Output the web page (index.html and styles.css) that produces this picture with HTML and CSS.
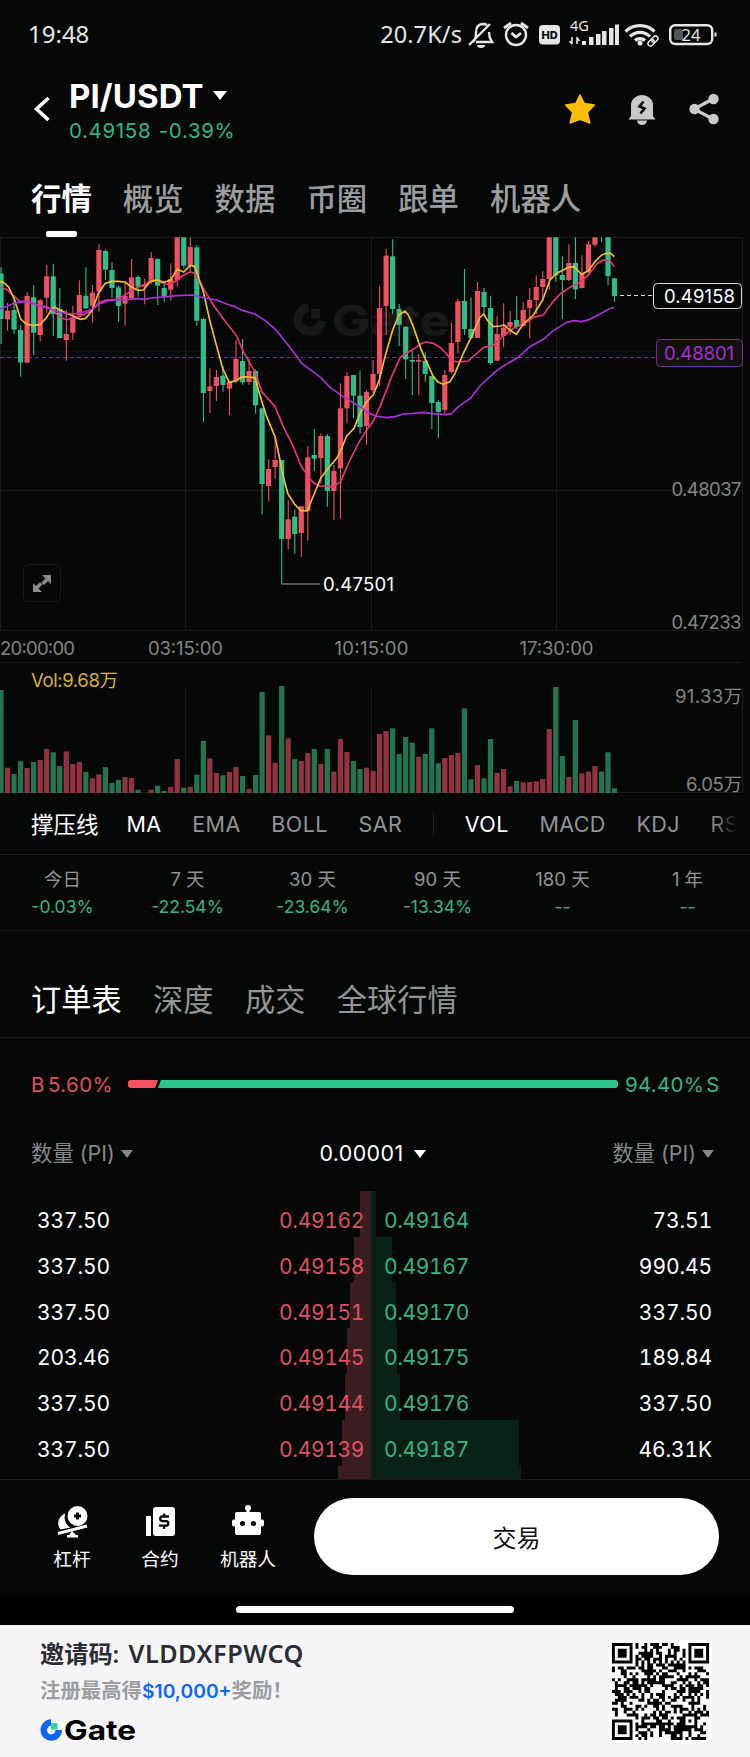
FILE: index.html
```html
<!DOCTYPE html>
<html lang="zh-CN">
<head>
    <meta charset="UTF-8">
    <meta name="viewport" content="width=device-width, initial-scale=1.0">
    <title>PI/USDT</title>
    <link rel="stylesheet" href="styles.css">
</head>
<body>

<div class="status-bar">
    <span class="clock">19:48</span>
    <div class="status-right">
        <span class="net-speed">20.7K/s</span>
        <svg class="status-icons" width="252" height="34" viewBox="465 16 252 34" fill="none" stroke="#e6e6e6" stroke-width="2.4">
            <!-- muted bell -->
            <path d="M473 41c2-2 3-5 3-9 0-5 2-9 7-9 1.500 0 3 .4 4 1M489 31c0 5 1 7 3 10H476M469 44L490 23"/>
            <path d="M477 44h8a4 3 0 0 1-8 0z" fill="#e6e6e6" stroke="none"/>
            <!-- alarm -->
            <circle cx="516" cy="34" r="10"/>
            <path d="M511.500 32l4.500 4 5-4M504 27l7-5M528 27l-7-5" stroke-width="2.800"/>
            <!-- hd -->
            <rect x="539" y="24" width="21" height="19.500" rx="4" fill="#e6e6e6" stroke="none"/>
            <text x="549.500" y="38" font-size="11" class="hd-text" text-anchor="middle">HD</text>
            <!-- signal -->
            <text x="570" y="30" font-size="14.500">4G</text>
            <path d="M572 36v7M569.500 40l2.500 3M577 43v-7M579.500 40l-2.500-3" stroke-width="1.600"/>
            <g fill="#e6e6e6" stroke="none">
                <rect x="582" y="40" width="4" height="4"/>
                <rect x="589" y="36" width="4.500" height="8"/>
                <rect x="596" y="33" width="4.500" height="11"/>
                <rect x="602" y="30" width="4.500" height="14"/>
                <rect x="609" y="27" width="4.500" height="17"/>
                <rect x="615" y="23.500" width="4" height="20.500"/>
            </g>
            <!-- wifi -->
            <path d="M625.500 30.500a21 21 0 0 1 29 0M630 35.500a14 14 0 0 1 20 0M635 39.500a7.500 7.500 0 0 1 10 0" stroke-width="3.200"/>
            <circle cx="640" cy="42" r="2.500" fill="#e6e6e6" stroke="none"/>
            <g stroke-width="1.500" transform="rotate(-45 653 40)">
                <rect x="647" y="37.500" width="7" height="5" rx="2.500"/>
                <rect x="652" y="37.500" width="7" height="5" rx="2.500"/>
            </g>
            <!-- battery -->
            <rect x="670.200" y="24.200" width="42" height="18.800" rx="5"/>
            <rect x="674" y="28" width="9" height="11" rx="2" fill="#555" stroke="none"/>
            <path d="M714.500 31.500h2v4h-2z" fill="#e6e6e6" stroke="none"/>
            <text x="691" y="39.500" font-size="16.500" text-anchor="middle">24</text>
        </svg>
    </div>
</div>

<header class="pair-header">
    <svg class="back" width="20" height="28" viewBox="0 0 20 28"><path d="M16.500 3L4.500 14l12 11" fill="none" stroke="#fff" stroke-width="3.600"/></svg>
    <div class="pair">
        <div class="pair-name">PI/USDT<i class="caret caret-big"></i></div>
        <div class="pair-price">0.49158 <span>-0.39%</span></div>
    </div>
    <div class="header-icons">
        <svg width="34" height="34" viewBox="0 0 34 34"><path d="M17 3l4.300 8.600 10 1.400-7 7.400 2.500 10.600L17 27.200 7.200 31l2.500-10.600-7-7.400 10-1.400z" fill="#ffbd0a" stroke="#ffbd0a" stroke-width="1.500" stroke-linejoin="round"/></svg>
        <svg width="34" height="34" viewBox="0 0 34 34">
            <path d="M6 24V13a11 10 0 0 1 22 0v11l2.500 3.500h-27zM12 28.500h10a5 4.500 0 0 1-10 0z" fill="#c8cacc"/>
            <path d="M18.500 9.500L14.500 14.500 19.500 16.500 15.500 21.500" fill="none" stroke="#060808" stroke-width="2.600"/>
        </svg>
        <svg width="34" height="34" viewBox="0 0 34 34" fill="#c8cacc">
            <path d="M26 7L7 17l19 10" fill="none" stroke="#c8cacc" stroke-width="3.200"/>
            <circle cx="26.500" cy="7" r="5.200"/><circle cx="7.500" cy="17" r="5.200"/><circle cx="26.500" cy="27" r="5.200"/>
        </svg>
    </div>
</header>

<nav class="main-tabs">
    <a class="active">行情</a><a>概览</a><a>数据</a><a>币圈</a><a>跟单</a><a>机器人</a>
</nav>

<svg class="chart" id="chart" width="750" height="557" viewBox="0 237 750 557">
    <g class="grid">
        <path d="M0 351.500H742" class="faint"/>
        <path d="M0 237.500H742M0 490.500H742M0 630.500H742M0 662.500H742M0 792.500H742"/>
        <path d="M.5 237V630M185.500 237V630M371.500 237V630M556.500 237V630M742.500 237V630M185.500 687V793M371.500 687V793M556.500 687V793M742.500 687V793"/>
    </g>
    <g class="watermark">
        <path d="M308.500 307.500a12 12 0 1 0 13.500 13.500" fill="none" stroke="#171818" stroke-width="9"/>
        <rect x="311" y="309" width="9" height="9"/>
        <text x="332" y="336" font-size="43" textLength="118" lengthAdjust="spacingAndGlyphs">Gate</text>
    </g>
    <path d="M0 357.500H656" class="level-line"/>
    <g id="candles"></g>
    <g id="lines"></g>
    <g id="volume"></g>
    <path d="M281.500 584H320" stroke="#9a9a9a" fill="none"/>
    <text x="323" y="591" class="label white" textLength="71">0.47501</text>
    <path d="M620 295.500H653" stroke="#ddd" stroke-dasharray="4 3" fill="none"/>
    <rect x="653.500" y="283.500" width="88" height="25" rx="4" class="price-box"/>
    <text x="664" y="303" class="label white" textLength="71">0.49158</text>
    <rect x="656.500" y="339.500" width="86" height="27" rx="4" class="level-box"/>
    <text x="664" y="360" class="label purple" textLength="70">0.48801</text>
    <text x="671.500" y="496" class="label" textLength="70">0.48037</text>
    <text x="671.500" y="629" class="label" textLength="70">0.47233</text>
    <text x="0" y="654.500" class="label" textLength="75">20:00:00</text>
    <text x="148" y="654.500" class="label" textLength="75">03:15:00</text>
    <text x="334.500" y="654.500" class="label" textLength="74">10:15:00</text>
    <text x="519.500" y="654.500" class="label" textLength="74">17:30:00</text>
    <text x="31" y="686.500" class="label yellow" textLength="87">Vol:9.68万</text>
    <text x="675" y="702.500" class="label" textLength="67">91.33万</text>
    <text x="686" y="791" class="label" textLength="56">6.05万</text>
    <rect x="23.500" y="564.500" width="37" height="37" rx="5" class="expand-box"/>
    <path d="M42 575h9v9l-3-3-4 4-2.500-2.500 4-4zM42 592h-9v-9l3 3 4-4 2.500 2.500-4 4z" fill="#8b8b8b"/>
</svg>

<div class="indicators">
    <span class="on cn">撑压线</span><span class="on">MA</span><span>EMA</span><span>BOLL</span><span>SAR</span>
    <i class="sep"></i>
    <span class="on">VOL</span><span>MACD</span><span>KDJ</span><span class="fade">RS</span>
</div>

<div class="performance">
    <div><p>今日</p><b>-0.03%</b></div>
    <div><p>7 天</p><b>-22.54%</b></div>
    <div><p>30 天</p><b>-23.64%</b></div>
    <div><p>90 天</p><b>-13.34%</b></div>
    <div><p>180 天</p><b>--</b></div>
    <div><p>1 年</p><b>--</b></div>
</div>

<nav class="book-tabs">
    <a class="active">订单表</a><a>深度</a><a>成交</a><a>全球行情</a>
</nav>

<div class="ratio">
    <span class="red">B 5.60%</span>
    <div class="ratio-bar"><i class="buy"></i><i class="sell"></i></div>
    <span class="green">94.40% S</span>
</div>

<div class="book-head">
    <span>数量 (PI)<i class="caret"></i></span>
    <span class="step">0.00001<i class="caret"></i></span>
    <span class="right">数量 (PI)<i class="caret"></i></span>
</div>

<div class="book" id="book"></div>

<div class="bottom-bar">
    <div class="tool">
        <svg width="34" height="34" viewBox="0 0 34 34" fill="#fff">
            <path d="M10.500 9.500a11 11 0 0 0 5 14L5.500 25.500A10 10 0 0 1 10.500 9.500z"/>
            <circle cx="22.500" cy="12" r="10"/>
            <path d="M22.500 8.500v7M19 12h7" stroke="#060808" stroke-width="3"/>
            <path d="M3 29.500L32 22" stroke="#fff" stroke-width="3"/>
            <path d="M17 27l4 4h2v2.500H12V31h2z"/>
        </svg>
        <span>杠杆</span>
    </div>
    <div class="tool">
        <svg width="34" height="34" viewBox="0 0 34 34" fill="#fff">
            <rect x="3" y="12" width="5" height="20"/>
            <rect x="10" y="3" width="22" height="29" rx="3"/>
            <path d="M26 12.500h-6.500a2.300 2.300 0 0 0 0 4.600h3.500a2.300 2.300 0 0 1 0 4.600H16M21.200 9.500V12M21.200 22v3" fill="none" stroke="#060808" stroke-width="2.300"/>
        </svg>
        <span>合约</span>
    </div>
    <div class="tool">
        <svg width="34" height="34" viewBox="0 0 34 34" fill="#fff">
            <circle cx="17" cy="4" r="3"/><rect x="15.500" y="4" width="3" height="5"/>
            <rect x="4" y="8" width="26" height="23" rx="2"/>
            <rect x="1" y="15.500" width="32" height="7" rx="2"/>
            <circle cx="11.500" cy="19.500" r="2.600" fill="#060808"/><circle cx="22.500" cy="19.500" r="2.600" fill="#060808"/>
        </svg>
        <span>机器人</span>
    </div>
    <button class="trade">交易</button>
</div>
<div class="home-area"><i></i></div>

<footer class="invite">
    <div class="invite-text">
        <h2>邀请码: <span>VLDDXFPWCQ</span></h2>
        <p>注册最高得<em>$10,000+</em>奖励！</p>
        <svg width="110" height="36" viewBox="0 0 110 36">
            <path d="M11 6.600A7.500 7.500 0 1 0 18.700 14" fill="none" stroke="#0b67fb" stroke-width="6.500"/>
            <rect x="11" y="7" width="6.500" height="6.500" fill="#2bd9a0"/>
            <text x="24" y="23.500" class="brand" textLength="72" lengthAdjust="spacingAndGlyphs">Gate</text>
        </svg>
    </div>
    <svg class="qr" id="qr" width="103" height="103" viewBox="-1 -1 35 35"></svg>
</footer>

<script src="script.js"></script>
</body>
</html>
```
FILE: styles.css
```css
* {
    box-sizing: border-box;
}
body {
    margin: 0;
    width: 750px;
    height: 1757px;
    overflow: hidden;
    background: #060808;
    color: #fff;
    font-family: Inter, "Noto Sans CJK SC", sans-serif;
    display: flex;
    flex-direction: column;
}
body > * {
    flex-shrink: 0;
}
p, h2 {
    margin: 0;
}
.status-bar {
    height: 68px;
    padding: 0 33px 0 28px;
    display: flex;
    align-items: center;
    justify-content: space-between;
    font-family: "Noto Sans", sans-serif;
    font-size: 24px;
    color: #e6e6e6;
}
.clock {
    padding-bottom: 2px;
}
.status-right {
    display: flex;
    align-items: center;
    gap: 3px;
}
.net-speed {
    font-size: 23.5px;
    letter-spacing: 0.1px;
    padding-bottom: 1px;
}
.status-icons {
    overflow: visible;
}
.status-icons text {
    stroke: none;
    fill: #e6e6e6;
}
.status-icons .hd-text {
    fill: #060808;
    font-family: Inter, sans-serif;
    font-weight: 800;
}
.pair-header {
    height: 98px;
    padding: 10px 29px 0 32px;
    display: flex;
    align-items: flex-start;
}
.back {
    margin-top: 17px;
}
.pair {
    margin-left: 17px;
    flex: 1;
}
.pair-name {
    font-size: 33px;
    line-height: 37px;
    font-weight: 700;
    letter-spacing: 0.1px;
}
.pair-price {
    margin-top: 3px;
    font-size: 20.5px;
    line-height: 26px;
    color: #34b581;
    letter-spacing: 0.65px;
}
.pair-price span {
    margin-left: 1px;
}
.caret {
    display: inline-block;
    border: 6px solid transparent;
    border-top: 8px solid currentColor;
    border-bottom: 0;
    margin-left: 6px;
    vertical-align: 3px;
}
.caret-big {
    border-width: 9px 7.5px 0;
    margin-left: 9px;
    vertical-align: 8px;
}
.header-icons {
    display: flex;
    gap: 28px;
    padding-top: 14px;
}
.main-tabs {
    height: 71px;
    padding: 12px 31px 0;
    display: flex;
    gap: 31px;
    font-size: 30.4px;
    line-height: 43px;
    font-weight: 500;
    color: #9b9d9f;
}
.main-tabs .active {
    color: #fff;
    font-weight: 700;
    display: flex;
    flex-direction: column;
    align-items: center;
}
.main-tabs .active::after {
    content: "";
    width: 31px;
    height: 6px;
    border-radius: 2px;
    margin-top: 10px;
    background: #fff;
}
.chart {
    display: block;
}
.grid path {
    stroke: #1a1c1c;
    fill: none;
}
.grid .faint {
    stroke: #0f1111;
}
.watermark {
    fill: #171818;
    font-weight: 800;
}
.level-line {
    stroke: #70349b;
    stroke-dasharray: 4 3;
}
.label {
    font-size: 18.5px;
    fill: #858585;
}
.label.white {
    fill: #fff;
}
.label.purple {
    fill: #a92fce;
}
.label.yellow {
    fill: #deb02f;
}
.price-box {
    fill: #060808;
    stroke: #ddd;
}
.level-box {
    fill: #111112;
    stroke: #7b2b9d;
}
.expand-box {
    fill: #060808;
    stroke: #1a1b1b;
}
.indicators {
    height: 61px;
    padding: 0 0 0 31px;
    display: flex;
    align-items: center;
    border-bottom: 1px solid #1c1e1e;
    font-size: 21.5px;
    letter-spacing: 0.4px;
    color: #929496;
    white-space: nowrap;
}
.indicators span {
    margin-right: 30.7px;
}
.indicators .on {
    color: #fff;
}
.indicators .cn {
    font-size: 22.5px;
    letter-spacing: 0;
    margin-right: 28px;
    padding-bottom: 2px;
}
.indicators .sep {
    width: 1px;
    height: 22px;
    margin-right: 31px;
    background: #242626;
}
.indicators .fade {
    margin: 0;
    color: transparent;
    background: linear-gradient(90deg, #858585 20%, #0b0d0d 90%);
    background-clip: text;
    -webkit-background-clip: text;
}
.performance {
    height: 76px;
    display: grid;
    grid-template-columns: repeat(6, 125px);
    text-align: center;
    padding-top: 10px;
    border-bottom: 1px solid #151717;
    font-size: 18.5px;
    line-height: 28px;
}
.performance p {
    color: #929496;
}
.performance b {
    display: block;
    color: #34b581;
    font-size: 17.5px;
    font-weight: 400;
}
.book-tabs {
    height: 107px;
    padding: 47px 31px 0;
    display: flex;
    gap: 31.5px;
    font-size: 30.2px;
    line-height: 44px;
    color: #929496;
    border-bottom: 1px solid #1a1c1c;
}
.book-tabs .active {
    color: #fff;
}
.ratio {
    height: 94px;
    padding: 0 30px 2px 31px;
    display: flex;
    align-items: center;
    font-size: 20.5px;
    letter-spacing: 0.4px;
    word-spacing: -3px;
    white-space: nowrap;
}
.red {
    width: 97px;
    color: #e04f61;
}
.green {
    width: 95px;
    color: #34b581;
    word-spacing: -4px;
    letter-spacing: 0.3px;
}
.ratio-bar {
    flex: 1;
    height: 8px;
    margin-right: 7px;
    display: flex;
    border-radius: 3px;
    overflow: hidden;
}
.buy {
    width: 30px;
    background: #f4525f;
    clip-path: polygon(0 0, 100% 0, 27px 100%, 0 100%);
}
.sell {
    flex: 1;
    background: #2cc48a;
    clip-path: polygon(3px 0, 100% 0, 100% 100%, 0 100%);
}
.book-head {
    height: 59px;
    padding: 13px 36px 0 31px;
    display: grid;
    grid-template-columns: 1fr 1fr 1fr;
    font-size: 21.4px;
    line-height: 16px;
    color: #858789;
}
.book-head .step {
    color: #fff;
    text-align: center;
    letter-spacing: 0.4px;
}
.step .caret {
    margin-left: 10px;
}
.book-head .right {
    text-align: right;
}
.book {
    height: 289px;
    overflow: hidden;
    border-bottom: 1px solid #1b1d1d;
    font-size: 21px;
    font-variant-numeric: tabular-nums;
    letter-spacing: -0.1px;
}
.row {
    display: grid;
    grid-template-columns: 371px 379px;
    height: 45.8px;
    line-height: 59px;
}
.side {
    display: flex;
    justify-content: space-between;
    background-repeat: no-repeat;
}
.side b {
    font-weight: 400;
    letter-spacing: -0.35px;
}
.bid {
    padding: 0 7px 0 37px;
    background-image: linear-gradient(#3a1d20, #3a1d20);
    background-position: right top;
}
.ask {
    padding: 0 38px 0 13px;
    background-image: linear-gradient(#0a2118, #0a2118);
}
.bid b {
    color: #df5061;
}
.ask b {
    color: #34b581;
}
.bottom-bar {
    height: 114px;
    padding: 18px 31px 0 31px;
    display: flex;
}
.tool {
    width: 88px;
    padding-top: 6px;
    display: flex;
    flex-direction: column;
    align-items: center;
    font-size: 18.7px;
    line-height: 28px;
}
.tool svg {
    margin-bottom: 8px;
}
.tool:first-child {
    width: 85px;
    padding-right: 3px;
}
.trade {
    width: 405px;
    height: 77px;
    margin-left: auto;
    padding: 0;
    border: none;
    border-radius: 39px;
    background: #fff;
    color: #111;
    font-family: "Noto Sans CJK SC", sans-serif;
    font-size: 24px;
}
.home-area {
    height: 31px;
    background: #000;
    display: flex;
    justify-content: center;
    padding-top: 12px;
}
.home-area i {
    width: 278px;
    height: 7px;
    border-radius: 4px;
    background: #fff;
}
.invite {
    height: 132px;
    padding: 10px 38px 0 40px;
    display: flex;
    justify-content: space-between;
    background: #f5f5f7;
}
.invite h2 {
    font-family: "Noto Sans", "Noto Sans CJK SC", sans-serif;
    font-size: 24.2px;
    line-height: 36px;
    font-weight: 600;
    color: #2b2d33;
}
.invite h2 span {
    font-size: 25.2px;
    letter-spacing: 0.5px;
    margin-left: 3px;
}
.invite p {
    font-family: "Noto Sans CJK SC", sans-serif;
    font-size: 20.4px;
    line-height: 34px;
    font-weight: 700;
    color: #9b9da1;
}
.invite em {
    font-family: Inter, sans-serif;
    font-size: 19.3px;
    font-style: normal;
    font-weight: 600;
    color: #0b67fb;
}
.invite-text svg {
    display: block;
    margin-top: 8px;
    overflow: visible;
}
.brand {
    font-size: 27px;
    font-weight: 700;
    fill: #000;
}
.qr {
    margin-top: 5px;
    background: #fff;
}
```
FILE: script.js
```js
// [up, high, body top, body bottom, low, volume top], one entry per candle
// y values are in thirds of a pixel
const candles = [
    [0,112,130,267,342,90],[1,218,242,268,302,323],[0,208,240,299,313,342],[0,285,300,398,440,304],
    [1,187,198,398,398,324],[0,166,202,308,376,306],[1,207,211,315,333,300],[1,105,139,203,250,267],
    [0,101,139,252,318,277],[0,174,237,324,324,318],[1,240,312,330,392,274],[1,228,262,308,330,312],
    [1,151,195,255,262,306],[0,112,197,235,237,336],[1,165,188,227,278,355],[1,43,60,185,245,343],
    [0,58,63,119,150,321],[0,96,120,174,203,369],[0,168,172,228,276,360],[1,160,198,221,287,351],
    [1,87,142,205,207,354],[0,136,141,170,200,389],[1,146,162,170,223,399],[1,66,84,155,162,389],
    [0,85,87,167,225,377],[0,165,174,198,215,393],[1,100,147,179,212,381],[1,22,22,150,170,297],
    [0,22,22,107,115,383],[1,22,51,108,125,381],[0,45,52,272,287,344],[0,262,267,489,576,243],
    [1,415,469,483,549,295],[1,420,441,468,513,339],[0,408,437,465,485,346],[1,452,456,476,555,336],
    [1,330,387,454,460,321],[0,327,393,457,464,348],[1,385,423,456,465,387],[0,418,423,526,551,345],
    [0,533,535,762,853,96],[1,688,717,768,815,226],[1,618,690,711,747,309],[0,690,690,927,1062,78],
    [1,810,868,927,957,235],[0,838,860,912,971,297],[1,828,829,909,980,303],[1,648,682,843,932,279],
    [0,597,675,686,723,267],[1,610,618,684,760,312],[0,612,618,783,830,267],[1,705,723,783,870,335],
    [1,460,535,715,866,237],[1,426,438,535,580,276],[0,435,435,497,565,303],[0,422,497,591,612,327],
    [1,480,486,588,644,323],[1,390,432,480,490,333],[1,167,234,432,468,222],[1,57,77,228,315,213],
    [0,28,79,237,253,205],[0,222,237,285,348,282],[0,290,290,388,447,231],[0,362,390,395,495,248],
    [1,372,390,395,495,290],[0,367,392,432,455,282],[0,437,438,519,597,205],[0,510,516,546,624,310],
    [1,420,435,540,550,294],[1,279,339,426,430,285],[1,207,214,336,370,279],[0,117,213,297,315,145],
    [0,202,297,324,327,358],[1,156,183,324,324,315],[0,174,186,231,252,355],[0,198,234,399,405,237],
    [1,259,312,392,393,338],[1,220,293,318,351,327],[1,243,276,290,315,379],[0,198,270,291,297,363],
    [1,217,240,288,290,367],[1,174,210,234,324,366],[1,136,171,210,252,364],[1,123,147,171,210,357],
    [1,22,22,147,180,207],[0,22,22,136,155,81],[0,78,135,150,267,288],[1,43,99,150,153,351],
    [0,22,99,178,207,180],[1,76,132,174,175,340],[1,33,43,127,132,335],[1,22,22,44,50,318],
    [0,22,22,22,37,335],[0,22,22,138,165,277],[0,144,145,198,215,385]
];

const averages = [
    ["#e83478", "0,170 22,180 42,198 60,215 82,213 101,222 121,228 140,230 160,240 179,262 199,269 218,266 238,260 258,250 277,240 297,218 316,211 350,208 375,195 395,182 414,172 434,165 453,150 473,152 493,162 512,162 532,150 551,135 571,125 585,132 610,175 640,225 660,253 680,280 710,318 730,365 750,400 765,425 785,485 825,530 850,590 880,650 903,708 922,735 940,758 960,768 1000,770 1022,755 1045,700 1075,640 1100,600 1120,573 1140,530 1175,440 1200,383 1215,372 1240,358 1265,340 1280,336 1300,340 1320,352 1340,372 1355,392 1375,396 1405,393 1425,375 1450,353 1480,345 1510,318 1540,295 1575,280 1600,262 1630,255 1655,220 1680,192 1710,172 1735,160 1765,135 1790,102 1810,90 1830,93 1843,110"],
    ["#f5bd2b", "0,155 10,157 25,170 42,205 62,267 80,283 101,286 121,283 140,262 155,237 165,232 180,240 200,250 220,258 240,268 258,265 277,240 295,190 316,160 336,154 355,154 375,156 395,172 414,181 430,180 450,155 470,150 493,157 512,150 532,118 551,126 571,106 585,110 600,155 610,185 629,270 649,345 668,415 688,458 707,452 727,440 765,443 775,480 800,560 825,620 840,690 850,740 864,792 884,823 903,842 922,843 935,810 962,745 985,715 1010,685 1021,665 1040,618 1062,595 1080,550 1100,515 1120,495 1138,450 1155,380 1178,300 1197,255 1215,243 1225,255 1240,290 1262,355 1275,385 1300,440 1315,457 1330,463 1350,455 1365,430 1390,370 1412,325 1440,262 1451,252 1465,275 1480,290 1500,288 1512,285 1530,300 1549,313 1570,282 1600,255 1628,210 1650,150 1670,130 1690,120 1705,112 1722,110 1745,133 1765,122 1785,95 1805,75 1820,70 1832,70 1843,80"],
    ["#ab30d6", "0,237 22,228 42,220 62,215 90,216 110,225 140,234 160,240 179,247 218,252 245,248 275,238 300,220 325,212 375,209 414,206 434,208 453,204 500,200 532,197 580,195 600,201 650,210 680,222 705,230 730,242 765,252 800,275 830,302 860,340 885,372 905,400 935,422 965,445 990,472 1020,493 1050,512 1080,530 1100,545 1125,558 1160,563 1185,560 1210,552 1240,550 1272,547 1300,551 1340,554 1355,550 1375,530 1412,504 1440,468 1470,440 1490,422 1520,402 1550,385 1590,350 1630,328 1660,302 1700,277 1722,272 1745,275 1770,268 1800,252 1825,238 1843,232"]
];

let candleSvg = "";
let volumeSvg = "";
candles.forEach(function ([up, high, top, bottom, low, vol], i) {
    const x = 1 + i * 6.527;
    const y = v => 230 + v / 3;
    const color = up ? "#f0505f" : "#2fbe87";
    candleSvg += `<rect x="${x - 0.5}" y="${y(high)}" width="1.1" height="${(low - high) / 3}" fill="${color}"/>`;
    candleSvg += `<rect x="${x - 2.6}" y="${y(top)}" width="5.2" height="${(bottom - top) / 3}" fill="${color}"/>`;
    volumeSvg += `<rect x="${x - 2.6}" y="${660 + vol / 3}" width="5.2" height="${(399 - vol) / 3}" fill="${up ? "#933342" : "#22764f"}"/>`;
});
document.getElementById("candles").innerHTML = candleSvg;
document.getElementById("volume").innerHTML = volumeSvg;
document.getElementById("lines").innerHTML = averages.map(([color, points]) =>
    `<polyline points="${points}" transform="translate(0 230) scale(.33333)" fill="none" stroke="${color}" stroke-width="5" stroke-linejoin="round"/>`
).join("");

// amount, bid, bid depth, ask, ask depth, amount
const orders = [
    ["337.50", "0.49162", 11.5, "0.49164", 5, "73.51"],
    ["337.50", "0.49158", 17.5, "0.49167", 21, "990.45"],
    ["337.50", "0.49151", 21.5, "0.49170", 25, "337.50"],
    ["203.46", "0.49145", 24, "0.49175", 26, "189.84"],
    ["337.50", "0.49144", 26.5, "0.49176", 29, "337.50"],
    ["337.50", "0.49139", 29, "0.49187", 148, "46.31K"],
    ["", "", 33, "", 150, ""]
];
document.getElementById("book").innerHTML = orders.map(o =>
    `<div class="row">
        <div class="side bid" style="background-size:${o[2]}px 100%"><span>${o[0]}</span><b>${o[1]}</b></div>
        <div class="side ask" style="background-size:${o[4]}px 100%"><b>${o[3]}</b><span>${o[5]}</span></div>
    </div>`
).join("");

// QR modules
const size = 33;
let seed = 7321;
let modules = "";
function ring(x, y, cx, cy) {
    return Math.max(Math.abs(x - cx), Math.abs(y - cy));
}
for (let y = 0; y < size; y++) {
    for (let x = 0; x < size; x++) {
        seed = (seed * 1103515245 + 12345) % 2147483648;
        let dark = (seed >> 16) % 2 === 0;
        if (x === 6 || y === 6) dark = (x + y) % 2 === 0;
        const align = ring(x, y, 26, 26);
        if (align <= 2) dark = align !== 1;
        [[3, 3], [29, 3], [3, 29]].forEach(function ([cx, cy]) {
            const d = ring(x, y, cx, cy);
            if (d <= 4) dark = d !== 2 && d !== 4;
        });
        if (dark) modules += `M${x} ${y}h1v1h-1z`;
    }
}
document.getElementById("qr").innerHTML = `<path d="${modules}" fill="#000"/>`;
```
